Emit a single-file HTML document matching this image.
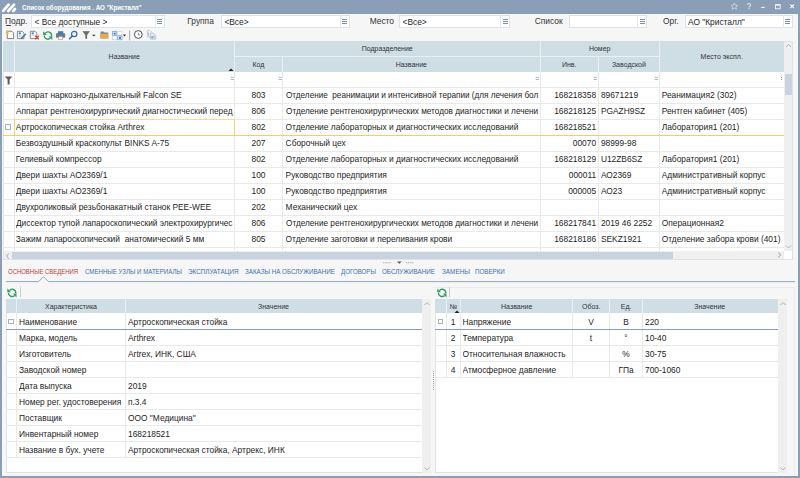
<!DOCTYPE html><html><head><meta charset="utf-8"><style>
*{margin:0;padding:0;box-sizing:border-box}
html,body{width:800px;height:478px;overflow:hidden;background:#f6f6f6;font-family:"Liberation Sans", sans-serif;color:#1e1e1e}
.ab{position:absolute}
.t{position:absolute;font-size:8.4px;line-height:10px;white-space:pre;overflow:hidden;transform:translateY(0.4px) scaleY(1.12);transform-origin:0 7.8px}
.h{position:absolute;font-size:7px;line-height:9px;white-space:pre;color:#30353a;text-align:center}
.vl{position:absolute;width:1px}
.hl{position:absolute;height:1px}
</style></head><body>

<div class="ab" style="left:0;top:0;width:800px;height:14px;background:#8a9fb6"></div>
<div class="ab" style="left:0;top:0;width:2px;height:478px;background:#8a9fb6"></div>
<div class="ab" style="left:798px;top:0;width:2px;height:478px;background:#8a9fb6"></div>
<div class="ab" style="left:0;top:475.5px;width:800px;height:2.5px;background:#8a9fb6"></div>
<svg class="ab" style="left:0;top:0" width="20" height="14" viewBox="0 0 20 14">
<path d="M3.2 10.9 L8.6 4.7" stroke="#fff" stroke-width="2.7" stroke-linecap="round"/>
<path d="M8.2 11.0 L14.0 4.7" stroke="#fff" stroke-width="2.7" stroke-linecap="round"/>
<path d="M13.3 10.9 L15.0 9.0" stroke="#fff" stroke-width="2.7" stroke-linecap="round"/>
</svg>
<div class="ab" style="left:22px;top:2.5px;font-size:6.6px;line-height:9px;font-weight:bold;color:#fff;white-space:pre;transform:scaleX(0.94);transform-origin:0 0">Список оборудования . АО "Кристалл"</div>
<svg class="ab" style="left:725px;top:0" width="75" height="14" viewBox="0 0 75 14">
<path d="M9.3 2.9 L10.3 5.2 L12.7 5.4 L10.9 7 L11.4 9.3 L9.3 8.1 L7.2 9.3 L7.7 7 L5.9 5.4 L8.3 5.2 Z" fill="none" stroke="#cfd8e2" stroke-width="0.8"/>
<path d="M22.4 4.9 Q22.5 3.5 24 3.5 Q25.6 3.5 25.6 4.9 Q25.6 5.8 24.6 6.3 Q24 6.6 24 7.4" fill="none" stroke="#dde4eb" stroke-width="1.1"/>
<rect x="23.4" y="8.1" width="1.2" height="1.1" fill="#dde4eb"/>
<rect x="36.2" y="6.8" width="3.6" height="1.1" fill="#f4f6f9"/>
<rect x="50.5" y="4.8" width="4.7" height="4" fill="none" stroke="#f4f6f9" stroke-width="0.9"/>
<rect x="50.5" y="4.4" width="4.7" height="1.2" fill="#f4f6f9"/>
<path d="M65.3 4.5 L69 8.1 M69 4.5 L65.3 8.1" stroke="#f4f6f9" stroke-width="1.1"/>
</svg>
<div class="t" style="left:5px;top:15.8px;color:#333">Подр.</div><div class="ab" style="left:5.6px;top:25.1px;width:5.4px;height:0.8px;background:#444"></div>
<div class="ab" style="left:31px;top:15.4px;width:133.75px;height:12.2px;background:#fff;border:1px solid #dde3ea"></div>
<div class="ab" style="left:154.75px;top:15.4px;width:1px;height:12.2px;background:#e3e8ee"></div>
<div class="ab" style="left:157.25px;top:18.5px;width:5px;height:0.9px;background:#7d8fa3"></div>
<div class="ab" style="left:157.25px;top:20.7px;width:5px;height:0.9px;background:#7d8fa3"></div>
<div class="ab" style="left:157.25px;top:22.9px;width:5px;height:0.9px;background:#7d8fa3"></div>
<div class="t" style="left:34.5px;top:16.5px">&lt; Все доступные &gt;</div>
<div class="t" style="left:187.25px;top:16.0px;color:#333">Группа</div>
<div class="ab" style="left:221px;top:15.4px;width:128.5px;height:12.2px;background:#fff;border:1px solid #dde3ea"></div>
<div class="ab" style="left:339.5px;top:15.4px;width:1px;height:12.2px;background:#e3e8ee"></div>
<div class="ab" style="left:342.0px;top:18.5px;width:5px;height:0.9px;background:#7d8fa3"></div>
<div class="ab" style="left:342.0px;top:20.7px;width:5px;height:0.9px;background:#7d8fa3"></div>
<div class="ab" style="left:342.0px;top:22.9px;width:5px;height:0.9px;background:#7d8fa3"></div>
<div class="t" style="left:224.4px;top:16.5px">&lt;Все&gt;</div>
<div class="t" style="left:369.7px;top:16.0px;color:#333">Место</div>
<div class="ab" style="left:399.3px;top:15.4px;width:110.69999999999999px;height:12.2px;background:#fff;border:1px solid #dde3ea"></div>
<div class="ab" style="left:500px;top:15.4px;width:1px;height:12.2px;background:#e3e8ee"></div>
<div class="ab" style="left:502.5px;top:18.5px;width:5px;height:0.9px;background:#7d8fa3"></div>
<div class="ab" style="left:502.5px;top:20.7px;width:5px;height:0.9px;background:#7d8fa3"></div>
<div class="ab" style="left:502.5px;top:22.9px;width:5px;height:0.9px;background:#7d8fa3"></div>
<div class="t" style="left:402.5px;top:16.5px">&lt;Все&gt;</div>
<div class="t" style="left:534.7px;top:16.0px;color:#333">Список</div>
<div class="ab" style="left:568.5px;top:15.4px;width:78.5px;height:12.2px;background:#fff;border:1px solid #dde3ea"></div>
<div class="ab" style="left:637px;top:15.4px;width:1px;height:12.2px;background:#e3e8ee"></div>
<div class="ab" style="left:639.5px;top:18.5px;width:5px;height:0.9px;background:#7d8fa3"></div>
<div class="ab" style="left:639.5px;top:20.7px;width:5px;height:0.9px;background:#7d8fa3"></div>
<div class="ab" style="left:639.5px;top:22.9px;width:5px;height:0.9px;background:#7d8fa3"></div>
<div class="t" style="left:663px;top:16.0px;color:#333">Орг.</div>
<div class="ab" style="left:685px;top:15.4px;width:107.79999999999995px;height:12.2px;background:#fff;border:1px solid #dde3ea"></div>
<div class="ab" style="left:782.8px;top:15.4px;width:1px;height:12.2px;background:#e3e8ee"></div>
<div class="ab" style="left:785.3px;top:18.5px;width:5px;height:0.9px;background:#7d8fa3"></div>
<div class="ab" style="left:785.3px;top:20.7px;width:5px;height:0.9px;background:#7d8fa3"></div>
<div class="ab" style="left:785.3px;top:22.9px;width:5px;height:0.9px;background:#7d8fa3"></div>
<div class="t" style="left:688px;top:16.5px">АО "Кристалл"</div>
<svg class="ab" style="left:0;top:28px" width="160" height="13" viewBox="0 0 160 13">
<!-- new -->
<path d="M7.3 3.3 H11.8 L13.6 5.1 V10.6 H7.3 Z" fill="#fff" stroke="#5a5a5a" stroke-width="0.75"/>
<path d="M7.2 2 L7.8 3.6 L9.4 3.4 L8.3 4.6 L9.2 6.1 L7.6 5.6 L6.9 7 L6.5 5.4 L4.9 5.3 L6.3 4.4 L5.8 2.8 Z" fill="#f1b447"/>
<!-- edit -->
<path d="M17.4 3.3 H22.2 L24 5.1 V10.6 H17.4 Z" fill="#f6f6f6" stroke="#6a6a6a" stroke-width="0.75"/>
<rect x="18.8" y="4.4" width="2" height="1.8" fill="#3f7cc8"/>
<path d="M18.8 7.3 H22 M18.8 8.6 H21" stroke="#aaa" stroke-width="0.5"/>
<path d="M20.6 11.4 L21.3 9.6 L25.4 5.4 L26.4 6.3 L22.3 10.6 Z" fill="#2f6fc4"/>
<!-- delete -->
<path d="M30.3 3.3 H35.1 L36.9 5.1 V10.6 H30.3 Z" fill="#f6f6f6" stroke="#6a6a6a" stroke-width="0.75"/>
<rect x="31.7" y="4.4" width="2" height="1.8" fill="#3f7cc8"/>
<path d="M31.7 7.3 H34.5" stroke="#aaa" stroke-width="0.5"/>
<path d="M35.3 7.8 L38.8 11.2 M38.8 7.8 L35.3 11.2" stroke="#d4392b" stroke-width="1.2"/>
<!-- refresh -->
<g transform="translate(42.8 2.7)">
<path d="M8.8 5.2 A3.6 3.6 0 0 0 2.4 2.6" fill="none" stroke="#2f9e62" stroke-width="1.4"/>
<path d="M1.4 4.8 A3.6 3.6 0 0 0 7.6 7.4" fill="none" stroke="#2f9e62" stroke-width="1.4"/>
<path d="M0.3 0.5 L0.3 4.3 L4.1 4.3 Z" fill="#2f9e62"/>
<path d="M5.9 5.6 L9.5 5.6 L9.5 9.4 Z" fill="#2f9e62"/>
</g>
<!-- printer -->
<rect x="58" y="3.2" width="5.2" height="2.6" fill="#3e78c2"/>
<rect x="56" y="5.2" width="9.2" height="4.6" rx="0.8" fill="#777b80"/>
<rect x="57.6" y="5.2" width="6" height="1" fill="#3e78c2"/>
<rect x="58.6" y="8.6" width="4.2" height="3" fill="#fff" stroke="#888" stroke-width="0.5"/>
<!-- search -->
<circle cx="74.2" cy="6" r="2.7" fill="none" stroke="#2a6cc0" stroke-width="1.2"/>
<path d="M72.3 8 L69.6 10.8" stroke="#2a6cc0" stroke-width="1.5" stroke-linecap="round"/>
<!-- funnel -->
<path d="M82.4 3.2 H90 L87.1 7 V10.8 H85.3 V7 Z" fill="#6a6a6a"/>
<path d="M92 6.7 H95.7 L93.85 8.5 Z" fill="#3a3a3a"/>
<!-- folder -->
<path d="M100.4 3.6 H103.6 L104.5 4.6 H108.2 V10.4 H100.4 Z" fill="#8a8a8a"/>
<path d="M100.4 6 H108.4 V10.4 H100.4 Z" fill="#e9aa4e"/>
<!-- layout -->
<rect x="112.6" y="3.7" width="4.2" height="3.8" fill="#fff" stroke="#4a86c8" stroke-width="0.6"/>
<rect x="113.6" y="4.6" width="2.2" height="2" fill="#3d7bc9"/>
<rect x="117.8" y="3.7" width="4.2" height="3.8" fill="#fff" stroke="#c9c9c9" stroke-width="0.6"/>
<rect x="112.6" y="8" width="4.2" height="3.8" fill="#fff" stroke="#c9c9c9" stroke-width="0.6"/>
<rect x="117.8" y="8" width="4.2" height="3.8" fill="#fff" stroke="#4a86c8" stroke-width="0.6"/>
<rect x="118.8" y="8.9" width="2.2" height="2" fill="#3d7bc9"/>
<path d="M122.8 6.6 H126.2 L124.5 8.4 Z" fill="#3a3a3a"/>
<!-- sep -->
<rect x="129.3" y="2.5" width="0.8" height="10" fill="#9a9a9a"/>
<!-- clock -->
<circle cx="138.3" cy="6.5" r="3.9" fill="#fff" stroke="#505050" stroke-width="1"/>
<path d="M138.3 4.6 V6.9 H140" fill="none" stroke="#5a8fcc" stroke-width="0.9"/>
<!-- copy -->
<path d="M147.4 2.6 H150.3 L151.8 4.1 V9 H147.4 Z" fill="#f7f7f7" stroke="#b0b0b0" stroke-width="0.6"/>
<rect x="148.1" y="4.3" width="1" height="3.6" fill="#8fbbe6"/>
<path d="M150.4 5.4 H153.6 L155.6 7.4 V11.2 H150.4 Z" fill="#f4f4f4" stroke="#a8a8a8" stroke-width="0.6"/>
<rect x="151.2" y="7.4" width="3.6" height="3.2" fill="#a9cdf0"/>
<rect x="151.6" y="8.2" width="1" height="2.2" fill="#5a9ad8"/>
</svg>
<div class="ab" style="left:3px;top:41px;width:789.5px;height:218.5px;background:#fff;border:1px solid #dfe3e8"></div>
<div class="ab" style="left:3px;top:41px;width:781px;height:30.5px;background:#cfdde5"></div>
<div class="ab" style="left:13.5px;top:41px;width:1px;height:30.200000000000003px;background:#eaeff3"></div>
<div class="ab" style="left:234.0px;top:41px;width:1px;height:30.200000000000003px;background:#eaeff3"></div>
<div class="ab" style="left:539.5px;top:41px;width:1px;height:30.200000000000003px;background:#eaeff3"></div>
<div class="ab" style="left:658.9px;top:41px;width:1px;height:30.200000000000003px;background:#eaeff3"></div>
<div class="ab" style="left:282.1px;top:56.3px;width:1px;height:14.900000000000006px;background:#eaeff3"></div>
<div class="ab" style="left:597.9px;top:56.3px;width:1px;height:14.900000000000006px;background:#eaeff3"></div>
<div class="ab" style="left:234.5px;top:56.3px;width:424.9px;height:1px;background:#eaeff3"></div>
<div class="h" style="left:64.25px;top:51.5px;width:120px">Название</div>
<div class="h" style="left:327.25px;top:44.2px;width:120px">Подразделение</div>
<div class="h" style="left:198.5px;top:59.5px;width:120px">Код</div>
<div class="h" style="left:351.3px;top:59.5px;width:120px">Название</div>
<div class="h" style="left:539.7px;top:44.2px;width:120px">Номер</div>
<div class="h" style="left:509.20000000000005px;top:59.5px;width:120px">Инв.</div>
<div class="h" style="left:568.9px;top:59.5px;width:120px">Заводской</div>
<div class="h" style="left:661.7px;top:51.5px;width:120px">Место экспл.</div>
<svg class="ab" style="left:228px;top:67.5px" width="6" height="4"><path d="M0.5 3 L3 0.5 L5.5 3 Z" fill="#222"/></svg>
<div class="ab" style="left:13.5px;top:71.2px;width:1px;height:180.39999999999998px;background:#e9e9e9"></div>
<div class="ab" style="left:234.0px;top:71.2px;width:1px;height:180.39999999999998px;background:#e9e9e9"></div>
<div class="ab" style="left:282.1px;top:71.2px;width:1px;height:180.39999999999998px;background:#e9e9e9"></div>
<div class="ab" style="left:539.5px;top:71.2px;width:1px;height:180.39999999999998px;background:#e9e9e9"></div>
<div class="ab" style="left:597.9px;top:71.2px;width:1px;height:180.39999999999998px;background:#e9e9e9"></div>
<div class="ab" style="left:658.9px;top:71.2px;width:1px;height:180.39999999999998px;background:#e9e9e9"></div>
<svg class="ab" style="left:229.5px;top:76px" width="5" height="5"><path d="M0.6 1.3 H4 M0.6 3.5 H4" stroke="#8e9cae" stroke-width="0.7"/></svg>
<svg class="ab" style="left:277.6px;top:76px" width="5" height="5"><path d="M0.6 1.3 H4 M0.6 3.5 H4" stroke="#8e9cae" stroke-width="0.7"/></svg>
<svg class="ab" style="left:535px;top:76px" width="5" height="5"><path d="M0.6 1.3 H4 M0.6 3.5 H4" stroke="#8e9cae" stroke-width="0.7"/></svg>
<svg class="ab" style="left:593.4px;top:76px" width="5" height="5"><path d="M0.6 1.3 H4 M0.6 3.5 H4" stroke="#8e9cae" stroke-width="0.7"/></svg>
<svg class="ab" style="left:654.4px;top:76px" width="5" height="5"><path d="M0.6 1.3 H4 M0.6 3.5 H4" stroke="#8e9cae" stroke-width="0.7"/></svg>
<div class="ab" style="left:781px;top:77px;width:1px;height:1px;background:#8e9cae"></div><div class="ab" style="left:781px;top:79px;width:1px;height:1px;background:#8e9cae"></div>
<svg class="ab" style="left:3.5px;top:74.5px" width="10" height="10" viewBox="0 0 10 10"><path d="M0.6 1.4 H8.4 L5.6 4.6 V9.4 H3.6 V4.6 Z" fill="#5c5c5c"/></svg>
<div class="ab" style="left:3px;top:87.2px;width:781px;height:1px;background:#e9e9e9"></div>
<div class="ab" style="left:3px;top:103.2px;width:781px;height:1px;background:#e9e9e9"></div>
<div class="t" style="left:15.8px;top:90.4px;width:218.7px">Аппарат наркозно-дыхательный Falcon SE</div>
<div class="t" style="left:234.5px;top:90.4px;width:48.10000000000002px;text-align:center">803</div>
<div class="t" style="left:285.6px;top:90.4px;width:260.578125px;transform:translateY(0.4px) scaleX(0.9753) scaleY(1.12)">Отделение  реанимации и интенсивной терапии (для лечения бол</div>
<div class="t" style="left:540px;top:90.4px;width:56.09999999999998px;text-align:right">168218358</div>
<div class="t" style="left:600.9px;top:90.4px;width:58.5px">89671219</div>
<div class="t" style="left:661.6999999999999px;top:90.4px;width:122.30000000000003px">Реанимация2 (302)</div>
<div class="ab" style="left:3px;top:119.2px;width:781px;height:1px;background:#e9e9e9"></div>
<div class="t" style="left:15.8px;top:106.4px;width:220.609375px;transform:translateY(0.4px) scaleX(0.9904) scaleY(1.12)">Аппарат рентгенохирургический диагностический перед</div>
<div class="t" style="left:234.5px;top:106.4px;width:48.10000000000002px;text-align:center">806</div>
<div class="t" style="left:285.6px;top:106.4px;width:258.84375px;transform:translateY(0.4px) scaleX(0.9819) scaleY(1.12)">Отделение рентгенохирургических методов диагностики и лечени</div>
<div class="t" style="left:540px;top:106.4px;width:56.09999999999998px;text-align:right">168218125</div>
<div class="t" style="left:600.9px;top:106.4px;width:58.5px">PGAZH9SZ</div>
<div class="t" style="left:661.6999999999999px;top:106.4px;width:122.30000000000003px">Рентген кабинет (405)</div>
<div class="ab" style="left:3px;top:135.2px;width:781px;height:1px;background:#e9e9e9"></div>
<div class="t" style="left:15.8px;top:122.4px;width:218.7px">Артроскопическая стойка Arthrex</div>
<div class="t" style="left:234.5px;top:122.4px;width:48.10000000000002px;text-align:center">802</div>
<div class="t" style="left:285.6px;top:122.4px;width:254.39999999999998px">Отделение лабораторных и диагностических исследований</div>
<div class="t" style="left:540px;top:122.4px;width:56.09999999999998px;text-align:right">168218521</div>
<div class="t" style="left:661.6999999999999px;top:122.4px;width:122.30000000000003px">Лаборатория1 (201)</div>
<div class="ab" style="left:3px;top:151.2px;width:781px;height:1px;background:#e9e9e9"></div>
<div class="t" style="left:15.8px;top:138.4px;width:218.7px">Безвоздушный краскопульт BINKS A-75</div>
<div class="t" style="left:234.5px;top:138.4px;width:48.10000000000002px;text-align:center">207</div>
<div class="t" style="left:285.6px;top:138.4px;width:254.39999999999998px">Сборочный цех</div>
<div class="t" style="left:540px;top:138.4px;width:56.09999999999998px;text-align:right">00070</div>
<div class="t" style="left:600.9px;top:138.4px;width:58.5px">98999-98</div>
<div class="ab" style="left:3px;top:167.2px;width:781px;height:1px;background:#e9e9e9"></div>
<div class="t" style="left:15.8px;top:154.4px;width:218.7px">Гелиевый компрессор</div>
<div class="t" style="left:234.5px;top:154.4px;width:48.10000000000002px;text-align:center">802</div>
<div class="t" style="left:285.6px;top:154.4px;width:254.39999999999998px">Отделение лабораторных и диагностических исследований</div>
<div class="t" style="left:540px;top:154.4px;width:56.09999999999998px;text-align:right">168218129</div>
<div class="t" style="left:600.9px;top:154.4px;width:58.5px">U12ZB6SZ</div>
<div class="t" style="left:661.6999999999999px;top:154.4px;width:122.30000000000003px">Лаборатория1 (201)</div>
<div class="ab" style="left:3px;top:183.2px;width:781px;height:1px;background:#e9e9e9"></div>
<div class="t" style="left:15.8px;top:170.4px;width:218.7px">Двери шахты АО2369/1</div>
<div class="t" style="left:234.5px;top:170.4px;width:48.10000000000002px;text-align:center">100</div>
<div class="t" style="left:285.6px;top:170.4px;width:254.39999999999998px">Руководство предприятия</div>
<div class="t" style="left:540px;top:170.4px;width:56.09999999999998px;text-align:right">000011</div>
<div class="t" style="left:600.9px;top:170.4px;width:58.5px">АО2369</div>
<div class="t" style="left:661.6999999999999px;top:170.4px;width:122.30000000000003px">Административный корпус</div>
<div class="ab" style="left:3px;top:199.2px;width:781px;height:1px;background:#e9e9e9"></div>
<div class="t" style="left:15.8px;top:186.4px;width:218.7px">Двери шахты АО2369/1</div>
<div class="t" style="left:234.5px;top:186.4px;width:48.10000000000002px;text-align:center">100</div>
<div class="t" style="left:285.6px;top:186.4px;width:254.39999999999998px">Руководство предприятия</div>
<div class="t" style="left:540px;top:186.4px;width:56.09999999999998px;text-align:right">000005</div>
<div class="t" style="left:600.9px;top:186.4px;width:58.5px">АО23</div>
<div class="t" style="left:661.6999999999999px;top:186.4px;width:122.30000000000003px">Административный корпус</div>
<div class="ab" style="left:3px;top:215.2px;width:781px;height:1px;background:#e9e9e9"></div>
<div class="t" style="left:15.8px;top:202.4px;width:218.7px">Двухроликовый резьбонакатный станок PEE-WEE</div>
<div class="t" style="left:234.5px;top:202.4px;width:48.10000000000002px;text-align:center">202</div>
<div class="t" style="left:285.6px;top:202.4px;width:254.39999999999998px">Механический цех</div>
<div class="ab" style="left:3px;top:231.2px;width:781px;height:1px;background:#e9e9e9"></div>
<div class="t" style="left:15.8px;top:218.4px;width:220.84375px;transform:translateY(0.4px) scaleX(0.9893) scaleY(1.12)">Диссектор тупой лапароскопический электрохирургичес</div>
<div class="t" style="left:234.5px;top:218.4px;width:48.10000000000002px;text-align:center">806</div>
<div class="t" style="left:285.6px;top:218.4px;width:258.84375px;transform:translateY(0.4px) scaleX(0.9819) scaleY(1.12)">Отделение рентгенохирургических методов диагностики и лечени</div>
<div class="t" style="left:540px;top:218.4px;width:56.09999999999998px;text-align:right">168217841</div>
<div class="t" style="left:600.9px;top:218.4px;width:58.5px">2019 46 2252</div>
<div class="t" style="left:661.6999999999999px;top:218.4px;width:122.30000000000003px">Операционная2</div>
<div class="ab" style="left:3px;top:247.2px;width:781px;height:1px;background:#e9e9e9"></div>
<div class="t" style="left:15.8px;top:234.4px;width:218.7px">Зажим лапароскопический  анатомический 5 мм</div>
<div class="t" style="left:234.5px;top:234.4px;width:48.10000000000002px;text-align:center">805</div>
<div class="t" style="left:285.6px;top:234.4px;width:254.39999999999998px">Отделение заготовки и переливания крови</div>
<div class="t" style="left:540px;top:234.4px;width:56.09999999999998px;text-align:right">168218186</div>
<div class="t" style="left:600.9px;top:234.4px;width:58.5px">SEKZ1921</div>
<div class="t" style="left:661.6999999999999px;top:234.4px;width:122.30000000000003px">Отделение забора крови (401)</div>
<div class="ab" style="left:3px;top:134.5px;width:781px;height:1.6px;background:#f4cf5c"></div>
<div class="ab" style="left:14px;top:119.2px;width:221px;height:16.3px;border:1px solid #f4d26a;border-top-color:#f3dc97;border-bottom:none"></div>
<div class="ab" style="left:5.4px;top:124.0px;width:5.6px;height:5.6px;border:0.7px solid #a9b2bf;background:#fff"></div>
<div class="ab" style="left:784px;top:42px;width:7.6px;height:209px;background:#efefef"></div>
<div class="ab" style="left:784.5px;top:73.9px;width:7.5px;height:21px;background:#c9d3df"></div>
<svg class="ab" style="left:784px;top:42px" width="9" height="7"><path d="M2 5 L4.5 2.5 L7 5" fill="none" stroke="#9aa4b0" stroke-width="0.8"/></svg>
<svg class="ab" style="left:784px;top:243px" width="9" height="7"><path d="M2 2.5 L4.5 5 L7 2.5" fill="none" stroke="#9aa4b0" stroke-width="0.8"/></svg>
<div class="ab" style="left:3.5px;top:251.3px;width:780.5px;height:7.6px;background:#efefef"></div>
<div class="ab" style="left:12px;top:251.6px;width:661px;height:7.6px;background:#c9d3df"></div>
<svg class="ab" style="left:3px;top:251.5px" width="8" height="8"><path d="M5.8 1.4 L3.2 4 L5.8 6.6" fill="none" stroke="#8d98a5" stroke-width="0.9"/></svg>
<svg class="ab" style="left:775px;top:251.3px" width="8" height="8"><path d="M3.2 1.6 L5.8 4 L3.2 6.4" fill="none" stroke="#8d98a5" stroke-width="0.9"/></svg>
<div class="ab" style="left:784px;top:251px;width:7.6px;height:7.8px;background:#fff"></div>
<svg class="ab" style="left:380px;top:259.5px" width="40" height="6"><path d="M3.3 2.7 H11.8 M26 2.7 H34.3" stroke="#7d8895" stroke-width="0.8" stroke-dasharray="1.1 1"/><path d="M16.8 1.6 H21.8 L19.3 3.8 Z" fill="#4f5a66"/></svg>
<div class="ab" style="left:8.299999999999999px;top:266.8px;font-size:7.5px;line-height:9px;white-space:pre;color:#b9403b;transform:scaleX(0.7941);transform-origin:0 0">ОСНОВНЫЕ СВЕДЕНИЯ</div>
<div class="ab" style="left:84.6px;top:266.8px;font-size:7.5px;line-height:9px;white-space:pre;color:#3f6eae;transform:scaleX(0.8159);transform-origin:0 0">СМЕННЫЕ УЗЛЫ И МАТЕРИАЛЫ</div>
<div class="ab" style="left:187.6px;top:266.8px;font-size:7.5px;line-height:9px;white-space:pre;color:#3f6eae;transform:scaleX(0.8462);transform-origin:0 0">ЭКСПЛУАТАЦИЯ</div>
<div class="ab" style="left:244.85px;top:266.8px;font-size:7.5px;line-height:9px;white-space:pre;color:#3f6eae;transform:scaleX(0.8319);transform-origin:0 0">ЗАКАЗЫ НА ОБСЛУЖИВАНИЕ</div>
<div class="ab" style="left:341.1px;top:266.8px;font-size:7.5px;line-height:9px;white-space:pre;color:#3f6eae;transform:scaleX(0.8192);transform-origin:0 0">ДОГОВОРЫ</div>
<div class="ab" style="left:382.40000000000003px;top:266.8px;font-size:7.5px;line-height:9px;white-space:pre;color:#3f6eae;transform:scaleX(0.8328);transform-origin:0 0">ОБСЛУЖИВАНИЕ</div>
<div class="ab" style="left:441.6px;top:266.8px;font-size:7.5px;line-height:9px;white-space:pre;color:#3f6eae;transform:scaleX(0.8506);transform-origin:0 0">ЗАМЕНЫ</div>
<div class="ab" style="left:474.8px;top:266.8px;font-size:7.5px;line-height:9px;white-space:pre;color:#3f6eae;transform:scaleX(0.8250);transform-origin:0 0">ПОВЕРКИ</div>
<svg class="ab" style="left:0;top:274px" width="800" height="10"><path d="M6 7.6 H38.7 L43.5 2.7 L48.3 7.6 H795.2" fill="none" stroke="#8ea8c6" stroke-width="1"/></svg>
<svg class="ab" style="left:6.8px;top:287.6px" width="10" height="10" viewBox="0 0 10 10">
<path d="M8.8 5.2 A3.6 3.6 0 0 0 2.4 2.6" fill="none" stroke="#2f9e62" stroke-width="1.4"/>
<path d="M1.4 4.8 A3.6 3.6 0 0 0 7.6 7.4" fill="none" stroke="#2f9e62" stroke-width="1.4"/>
<path d="M0.3 0.5 L0.3 4.3 L4.1 4.3 Z" fill="#2f9e62"/>
<path d="M5.9 5.6 L9.5 5.6 L9.5 9.4 Z" fill="#2f9e62"/>
</svg>
<div class="ab" style="left:19.6px;top:287.3px;width:1px;height:10.199999999999989px;background:#cdcdcd"></div>
<div class="ab" style="left:433px;top:286.5px;width:362px;height:188px;border:1px solid #ebebeb;border-bottom:none;border-left:none"></div>
<svg class="ab" style="left:436.8px;top:287.6px" width="10" height="10" viewBox="0 0 10 10">
<path d="M8.8 5.2 A3.6 3.6 0 0 0 2.4 2.6" fill="none" stroke="#2f9e62" stroke-width="1.4"/>
<path d="M1.4 4.8 A3.6 3.6 0 0 0 7.6 7.4" fill="none" stroke="#2f9e62" stroke-width="1.4"/>
<path d="M0.3 0.5 L0.3 4.3 L4.1 4.3 Z" fill="#2f9e62"/>
<path d="M5.9 5.6 L9.5 5.6 L9.5 9.4 Z" fill="#2f9e62"/>
</svg>
<div class="ab" style="left:449.4px;top:287.3px;width:1px;height:10.199999999999989px;background:#cdcdcd"></div>
<div class="ab" style="left:6px;top:298.5px;width:424.8px;height:174.7px;background:#fff;border:1px solid #dfe3e8"></div>
<div class="ab" style="left:6px;top:298.5px;width:415.5px;height:14.8px;background:#cfdde5"></div>
<div class="ab" style="left:15.5px;top:298.5px;width:1px;height:14.800000000000011px;background:#eaeff3"></div>
<div class="ab" style="left:125.0px;top:298.5px;width:1px;height:14.800000000000011px;background:#eaeff3"></div>
<div class="h" style="left:11px;top:301.5px;width:120px">Характеристика</div>
<div class="h" style="left:213.5px;top:301.5px;width:120px">Значение</div>
<div class="ab" style="left:15.5px;top:313.3px;width:1px;height:144.0px;background:#e9e9e9"></div>
<div class="ab" style="left:125.0px;top:313.3px;width:1px;height:144.0px;background:#e9e9e9"></div>
<div class="ab" style="left:6px;top:328.8px;width:415.5px;height:1px;background:#e9e9e9"></div>
<div class="ab" style="left:6px;top:344.8px;width:415.5px;height:1px;background:#e9e9e9"></div>
<div class="ab" style="left:6px;top:360.8px;width:415.5px;height:1px;background:#e9e9e9"></div>
<div class="ab" style="left:6px;top:376.8px;width:415.5px;height:1px;background:#e9e9e9"></div>
<div class="ab" style="left:6px;top:392.8px;width:415.5px;height:1px;background:#e9e9e9"></div>
<div class="ab" style="left:6px;top:408.8px;width:415.5px;height:1px;background:#e9e9e9"></div>
<div class="ab" style="left:6px;top:424.8px;width:415.5px;height:1px;background:#e9e9e9"></div>
<div class="ab" style="left:6px;top:440.8px;width:415.5px;height:1px;background:#e9e9e9"></div>
<div class="ab" style="left:6px;top:456.8px;width:415.5px;height:1px;background:#e9e9e9"></div>
<div class="t" style="left:19px;top:316.5px;width:105.5px">Наименование</div>
<div class="t" style="left:128.0px;top:316.5px;width:292.5px">Артроскопическая стойка</div>
<div class="t" style="left:19px;top:332.5px;width:105.5px">Марка, модель</div>
<div class="t" style="left:128.0px;top:332.5px;width:292.5px">Arthrex</div>
<div class="t" style="left:19px;top:348.5px;width:105.5px">Изготовитель</div>
<div class="t" style="left:128.0px;top:348.5px;width:292.5px">Artrex, ИНК, США</div>
<div class="t" style="left:19px;top:364.5px;width:105.5px">Заводской номер</div>
<div class="t" style="left:19px;top:380.5px;width:105.5px">Дата выпуска</div>
<div class="t" style="left:128.0px;top:380.5px;width:292.5px">2019</div>
<div class="t" style="left:19px;top:396.5px;width:105.5px">Номер рег. удостоверения</div>
<div class="t" style="left:128.0px;top:396.5px;width:292.5px">п.3.4</div>
<div class="t" style="left:19px;top:412.5px;width:105.5px">Поставщик</div>
<div class="t" style="left:128.0px;top:412.5px;width:292.5px">ООО "Медицина"</div>
<div class="t" style="left:19px;top:428.5px;width:105.5px">Инвентарный номер</div>
<div class="t" style="left:128.0px;top:428.5px;width:292.5px">168218521</div>
<div class="t" style="left:19px;top:444.5px;width:105.5px">Название в бух. учете</div>
<div class="t" style="left:128.0px;top:444.5px;width:292.5px">Артроскопическая стойка, Артрекс, ИНК</div>
<div class="ab" style="left:6px;top:328.5px;width:415.5px;height:1.2px;background:#8b9db5"></div>
<div class="ab" style="left:8.4px;top:318.6px;width:5.6px;height:5.6px;border:0.7px solid #a9b2bf;background:#fff"></div>
<div class="ab" style="left:421.5px;top:298.5px;width:9.300000000000011px;height:174.7px;background:#efefef"></div>
<svg class="ab" style="left:421.5px;top:299.5px" width="10" height="7"><path d="M2.5 5 L5 2.5 L7.5 5" fill="none" stroke="#9aa4b0" stroke-width="0.8"/></svg>
<svg class="ab" style="left:421.5px;top:465.2px" width="10" height="7"><path d="M2.5 2.5 L5 5 L7.5 2.5" fill="none" stroke="#9aa4b0" stroke-width="0.8"/></svg>
<div class="ab" style="left:435.1px;top:298.5px;width:351.6px;height:174.7px;background:#fff;border:1px solid #dfe3e8"></div>
<div class="ab" style="left:435.1px;top:298.5px;width:342.9px;height:14.8px;background:#cfdde5"></div>
<div class="ab" style="left:445.5px;top:298.5px;width:1px;height:14.800000000000011px;background:#eaeff3"></div>
<div class="ab" style="left:459.5px;top:298.5px;width:1px;height:14.800000000000011px;background:#eaeff3"></div>
<div class="ab" style="left:572.0px;top:298.5px;width:1px;height:14.800000000000011px;background:#eaeff3"></div>
<div class="ab" style="left:609.0px;top:298.5px;width:1px;height:14.800000000000011px;background:#eaeff3"></div>
<div class="ab" style="left:642.0px;top:298.5px;width:1px;height:14.800000000000011px;background:#eaeff3"></div>
<div class="h" style="left:393.4px;top:301.5px;width:120px">№</div>
<div class="h" style="left:456.70000000000005px;top:301.5px;width:120px">Название</div>
<div class="h" style="left:531.2px;top:301.5px;width:120px">Обоз.</div>
<div class="h" style="left:566.1px;top:301.5px;width:120px">Ед.</div>
<div class="h" style="left:649.7px;top:301.5px;width:120px">Значение</div>
<div class="ab" style="left:445.5px;top:313.3px;width:1px;height:64.0px;background:#e9e9e9"></div>
<div class="ab" style="left:459.5px;top:313.3px;width:1px;height:64.0px;background:#e9e9e9"></div>
<div class="ab" style="left:572.0px;top:313.3px;width:1px;height:64.0px;background:#e9e9e9"></div>
<div class="ab" style="left:609.0px;top:313.3px;width:1px;height:64.0px;background:#e9e9e9"></div>
<div class="ab" style="left:642.0px;top:313.3px;width:1px;height:64.0px;background:#e9e9e9"></div>
<div class="ab" style="left:435.1px;top:328.8px;width:342.9px;height:1px;background:#e9e9e9"></div>
<div class="ab" style="left:435.1px;top:344.8px;width:342.9px;height:1px;background:#e9e9e9"></div>
<div class="ab" style="left:435.1px;top:360.8px;width:342.9px;height:1px;background:#e9e9e9"></div>
<div class="ab" style="left:435.1px;top:376.8px;width:342.9px;height:1px;background:#e9e9e9"></div>
<div class="t" style="left:446px;top:316.5px;width:14px;text-align:center">1</div>
<div class="t" style="left:462.5px;top:316.5px;width:109.0px">Напряжение</div>
<div class="t" style="left:572.5px;top:316.5px;width:37.0px;text-align:center">V</div>
<div class="t" style="left:609.5px;top:316.5px;width:33.0px;text-align:center">В</div>
<div class="t" style="left:645.0px;top:316.5px;width:132.0px">220</div>
<div class="t" style="left:446px;top:332.5px;width:14px;text-align:center">2</div>
<div class="t" style="left:462.5px;top:332.5px;width:109.0px">Температура</div>
<div class="t" style="left:572.5px;top:332.5px;width:37.0px;text-align:center">t</div>
<div class="t" style="left:609.5px;top:332.5px;width:33.0px;text-align:center">°</div>
<div class="t" style="left:645.0px;top:332.5px;width:132.0px">10-40</div>
<div class="t" style="left:446px;top:348.5px;width:14px;text-align:center">3</div>
<div class="t" style="left:462.5px;top:348.5px;width:109.0px">Относительная влажность</div>
<div class="t" style="left:609.5px;top:348.5px;width:33.0px;text-align:center">%</div>
<div class="t" style="left:645.0px;top:348.5px;width:132.0px">30-75</div>
<div class="t" style="left:446px;top:364.5px;width:14px;text-align:center">4</div>
<div class="t" style="left:462.5px;top:364.5px;width:109.0px">Атмосферное давление</div>
<div class="t" style="left:609.5px;top:364.5px;width:33.0px;text-align:center">ГПа</div>
<div class="t" style="left:645.0px;top:364.5px;width:132.0px">700-1060</div>
<div class="ab" style="left:435.1px;top:328.5px;width:342.9px;height:1.2px;background:#8b9db5"></div>
<div class="ab" style="left:437.5px;top:318.6px;width:5.6px;height:5.6px;border:0.7px solid #a9b2bf;background:#fff"></div>
<div class="ab" style="left:778px;top:298.5px;width:8.700000000000045px;height:174.7px;background:#efefef"></div>
<svg class="ab" style="left:778px;top:299.5px" width="10" height="7"><path d="M2.5 5 L5 2.5 L7.5 5" fill="none" stroke="#9aa4b0" stroke-width="0.8"/></svg>
<svg class="ab" style="left:778px;top:465.2px" width="10" height="7"><path d="M2.5 2.5 L5 5 L7.5 2.5" fill="none" stroke="#9aa4b0" stroke-width="0.8"/></svg>
<svg class="ab" style="left:454px;top:309.8px" width="6" height="4"><path d="M0.5 3 L3 0.5 L5.5 3 Z" fill="#222"/></svg>
<svg class="ab" style="left:432px;top:371px" width="3" height="19"><path d="M1.5 0 V19" stroke="#8d98a5" stroke-width="0.9" stroke-dasharray="1 1"/></svg>
</body></html>
